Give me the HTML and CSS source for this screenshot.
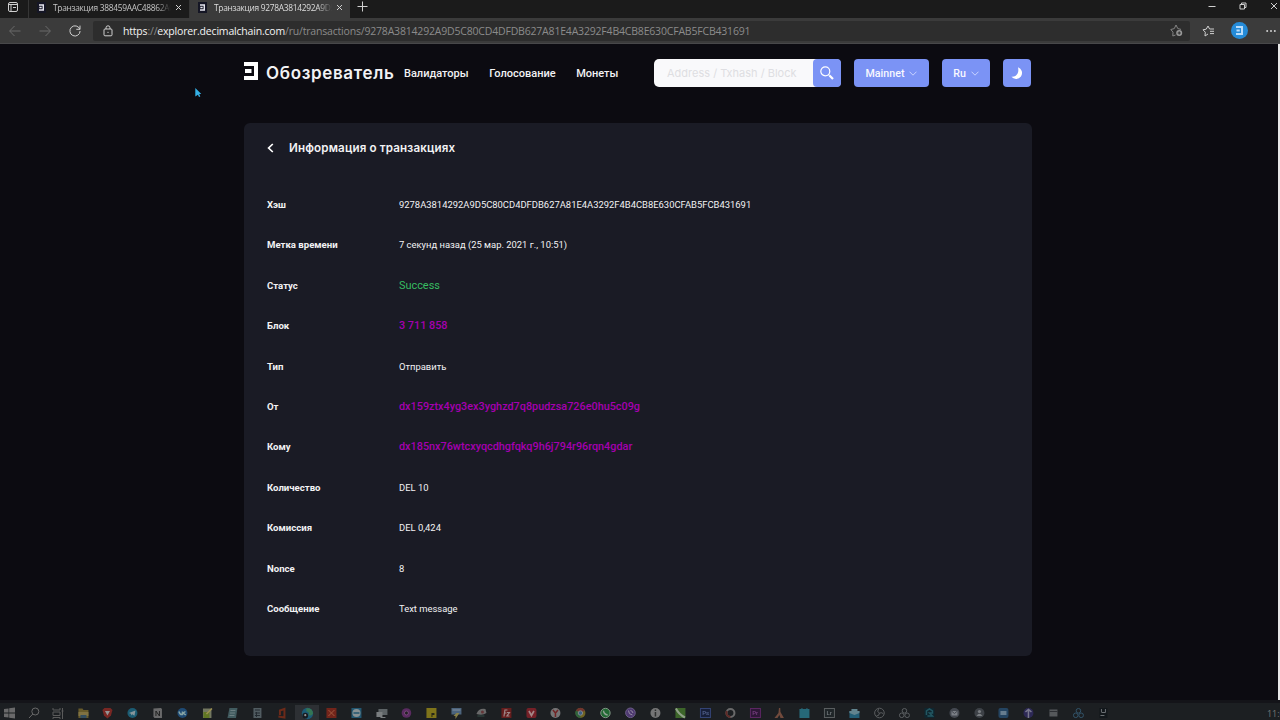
FILE: index.html
```html
<!DOCTYPE html>
<html lang="ru">
<head>
    <meta charset="UTF-8">
    <title>Транзакция</title>
    <link rel="stylesheet" href="styles.css">
</head>
<body>
<svg class="defs">
    <symbol id="logo" viewBox="0 0 14 18">
        <path d="M0 0H14V18H0V14H10V4H0zM1 7H7.5V11H1z"/>
    </symbol>
</svg>

<div class="tabs">
    <div class="tab-menu">
        <svg width="12" height="12" viewBox="0 0 12 12"><rect x="1.5" y="1.5" width="9" height="9" rx="1.5"/><path d="M1.5 3.5H10.5M4 4V10M6 6.5H9"/></svg>
    </div>
    <div class="tab">
        <span class="favicon"><svg width="5" height="7"><use href="#logo"/></svg></span>
        <span class="tab-title">Транзакция 388459AAC48862A0</span>
        <svg class="close" width="7" height="7" viewBox="0 0 7 7"><path d="M1 1L6 6M6 1L1 6"/></svg>
    </div>
    <div class="tab active">
        <span class="favicon"><svg width="5" height="7"><use href="#logo"/></svg></span>
        <span class="tab-title">Транзакция 9278A3814292A9D5</span>
        <svg class="close" width="7" height="7" viewBox="0 0 7 7"><path d="M1 1L6 6M6 1L1 6"/></svg>
    </div>
    <svg class="plus" width="11" height="11" viewBox="0 0 11 11"><path d="M5.5 .5V10.5M.5 5.5H10.5"/></svg>
    <div class="window-buttons">
        <svg width="8" height="8" viewBox="0 0 8 8"><path d="M.5 4.5H7.5"/></svg>
        <svg width="8" height="8" viewBox="0 0 8 8"><path d="M1 2.5H5.5V7H1zM2.5 2.5V1H7V5.5H5.5"/></svg>
        <svg width="8" height="8" viewBox="0 0 8 8"><path d="M1 1L7 7M7 1L1 7"/></svg>
    </div>
</div>

<div class="toolbar">
    <div class="nav-buttons">
        <svg class="off" width="12" height="12" viewBox="0 0 12 12"><path d="M11.5 6H.8M5.5 1L.6 6L5.5 11"/></svg>
        <svg class="off" width="12" height="12" viewBox="0 0 12 12"><path d="M.5 6H11.2M6.5 1L11.4 6L6.5 11"/></svg>
        <svg width="12" height="12" viewBox="0 0 12 12"><path d="M10.8 4.2A5.1 5.1 0 1 0 11.1 6M11 .6V4.3H7.3"/></svg>
    </div>
    <div class="address">
        <svg width="10" height="12" viewBox="0 0 10 12"><rect x="1" y="4" width="8" height="6.8" rx="1"/><path d="M3 4V2.8A2 2 0 0 1 7 2.8V4M5 6.8V8"/></svg>
        <p class="url"><span class="strong">https</span>://<span class="strong">explorer.decimalchain.com</span><span class="path">/ru/transactions/9278A3814292A9D5C80CD4DFDB627A81E4A3292F4B4CB8E630CFAB5FCB431691</span></p>
        <svg class="star-add" width="13" height="13" viewBox="0 0 13 13"><path d="M5.5 11L2.8 12L3 8.2L.8 5.5L4.3 4.6L6 1L7.8 4.6L11 5.4"/><circle class="dot" cx="9.2" cy="9" r="3"/><path class="cut" d="M9.2 7.4V10.6M7.6 9H10.8"/></svg>
    </div>
    <div class="tools">
        <svg width="13" height="12" viewBox="0 0 13 12"><path d="M6 9L3 11L3.3 7.2L1 4.8L4.2 4.2L6 1L7.6 4H12M8 6.3H12M8 8.6H12"/></svg>
        <span class="avatar"><svg width="7" height="9"><use href="#logo"/></svg></span>
        <svg class="more" width="10" height="4" viewBox="0 0 10 4"><circle cx="1.2" cy="2" r="1"/><circle cx="5" cy="2" r="1"/><circle cx="8.8" cy="2" r="1"/></svg>
    </div>
</div>

<div class="page">
    <svg class="cursor" width="7" height="10" viewBox="0 0 7 10"><path d="M.3 0L6.3 6H4.2L5.3 8.6L4 9.1L2.9 6.7L.3 8.4z"/></svg>
    <header>
        <svg class="logo" width="14" height="18"><use href="#logo"/></svg>
        <h1>Обозреватель</h1>
        <nav>
            <a>Валидаторы</a>
            <a>Голосование</a>
            <a>Монеты</a>
        </nav>
        <div class="search">
            <span class="placeholder">Address / Txhash / Block</span>
            <button><svg width="14" height="14" viewBox="0 0 14 14"><circle cx="5.3" cy="5.3" r="4.5"/><path d="M8.6 8.6L9.5 9.5"/><path class="handle" d="M9.5 9.5L13 13"/></svg></button>
        </div>
        <button class="btn mainnet">Mainnet <svg width="8" height="5" viewBox="0 0 8 5"><path d="M.5 .7L4 4.2L7.5 .7"/></svg></button>
        <button class="btn lang">Ru <svg width="8" height="5" viewBox="0 0 8 5"><path d="M.5 .7L4 4.2L7.5 .7"/></svg></button>
        <button class="btn theme"><svg width="12" height="12" viewBox="0 0 12 12"><path d="M7 .3A6 6 0 1 1 .4 9.8C5 10.2 8.5 6.5 7 .3z"/></svg></button>
    </header>

    <main class="card">
        <div class="card-title">
            <svg width="7" height="10" viewBox="0 0 7 10"><path d="M5.8 1L1.6 5L5.8 9"/></svg>
            <h2>Информация о транзакциях</h2>
        </div>
        <dl>
            <dt>Хэш</dt>
            <dd>9278A3814292A9D5C80CD4DFDB627A81E4A3292F4B4CB8E630CFAB5FCB431691</dd>
            <dt>Метка времени</dt>
            <dd>7 секунд назад (25 мар. 2021 г., 10:51)</dd>
            <dt>Статус</dt>
            <dd class="success">Success</dd>
            <dt>Блок</dt>
            <dd class="link">3 711 858</dd>
            <dt>Тип</dt>
            <dd>Отправить</dd>
            <dt>От</dt>
            <dd class="link">dx159ztx4yg3ex3yghzd7q8pudzsa726e0hu5c09g</dd>
            <dt>Кому</dt>
            <dd class="link">dx185nx76wtcxyqcdhgfqkq9h6j794r96rqn4gdar</dd>
            <dt>Количество</dt>
            <dd>DEL 10</dd>
            <dt>Комиссия</dt>
            <dd>DEL 0,424</dd>
            <dt>Nonce</dt>
            <dd>8</dd>
            <dt>Сообщение</dt>
            <dd>Text message</dd>
        </dl>
    </main>
    <div class="scrollbar"></div>
</div>

<div class="taskbar">
    <svg viewBox="0 0 12 12"><path fill="#777" d="M1 2L5.5 1.4V5.6H1zM6.2 1.3L12 .5V5.6H6.2zM1 6.4H5.5V10.6L1 10zM6.2 6.4H12V11.5L6.2 10.7z"/></svg>
    <svg viewBox="0 0 12 12"><g fill="none" stroke="#777"><circle cx="7.3" cy="4.5" r="3.5"/><path d="M4.8 7L1 11"/></g></svg>
    <svg viewBox="0 0 12 12"><g fill="none" stroke="#666"><path d="M1 1V3H8V1M1 5H8V8.5H1zM1 12V10.5H8V12M10.5 1V12M9.5 4H11.5"/></g></svg>
    <svg viewBox="0 0 12 12"><path fill="#75652c" d="M1 1.5H5L6 3H11V11H1z"/><path fill="#918048" d="M1 5H11V9H1z"/><path fill="#38566a" d="M3 8H9V11H3z"/></svg>
    <svg viewBox="0 0 12 12"><path fill="#8a2924" d="M3 1H9L11 3L9.5 8.5L6 11.5L2.5 8.5L1 3z"/><path fill="#aaa" d="M3.5 4H8.5L6 8.5z"/></svg>
    <svg viewBox="0 0 12 12"><circle cx="6" cy="6" r="5" fill="#1b6681"/><path fill="#9aabb0" d="M2.5 6L9 3.4L8 8.7L5.7 7.2L4.8 8.5L4.5 6.7z"/></svg>
    <svg viewBox="0 0 12 12"><path fill="#777" d="M2 1.5L9.5 1L10.5 2V11H3L2 9.5z"/><path fill="none" stroke="#222" d="M4.5 9V4L8 9V4"/></svg>
    <svg viewBox="0 0 12 12"><circle cx="6" cy="6" r="5" fill="#1f5283"/><path fill="none" stroke="#9bb" stroke-width="1.5" d="M2.5 4.5Q3.5 8 6 7.5V4.5M9 4.5L6.8 6L9.3 8"/></svg>
    <svg viewBox="0 0 12 12"><path fill="#82876b" d="M1.5 1.5H10V11H1.5z"/><path fill="#6d8724" d="M2 5H8V11H2z"/><path stroke="#b3a55a" stroke-width="1.5" d="M5 7L10.5 1.5"/></svg>
    <svg viewBox="0 0 12 12"><path fill="#48666a" d="M3 1H11L9.5 11H1z"/><path stroke="#7a9093" d="M4 3.5H9M3.5 6H8.5M3 8.5H8"/></svg>
    <svg viewBox="0 0 12 12"><path fill="#5b676d" d="M2 1H10V11H2z"/><path stroke="#252d33" d="M3.5 3H8.5M3.5 6H8.5M3.5 8.5H8.5M5 5V10"/></svg>
    <svg viewBox="0 0 12 12"><path fill="none" stroke="#7a2c18" stroke-width="2" d="M2 9.5L8 10.5V2L3.5 3.5V8"/></svg>
    <svg class="current" viewBox="0 0 12 12"><circle cx="6" cy="6" r="5.2" fill="#1c6684"/><path fill="#39855d" d="M5 1.2Q10.5 .5 11.2 6Q10 8.5 7 7.5Q8.5 5 5 4z"/><circle cx="4" cy="8" r="2.6" fill="#171b20"/><circle cx="4" cy="7.5" r="1" fill="#aaa"/></svg>
    <svg viewBox="0 0 12 12"><path fill="#812519" d="M1 1H11V11H1z"/><path stroke="#b86144" d="M3 3L9 9M9 3L3 9"/></svg>
    <svg viewBox="0 0 12 12"><path fill="#23607e" d="M1 1H11V11H1z"/><circle cx="6" cy="6" r="4" fill="#9aa5a8"/><path stroke="#23607e" stroke-width="1.5" d="M3 6H9"/></svg>
    <svg viewBox="0 0 12 12"><path fill="#697072" d="M3 2H12V8H3z"/><path fill="#8a8e90" d="M1 5H7V10H1zM5 10H10V11H5z"/></svg>
    <svg viewBox="0 0 12 12"><circle cx="6" cy="6" r="4.8" fill="#652d6c"/><circle cx="6" cy="6" r="2" fill="#222" stroke="#87518a"/></svg>
    <svg viewBox="0 0 12 12"><path fill="#918319" d="M1 1H11V11H1z"/><path fill="#282817" d="M6 6H9V8H7V10H6z"/></svg>
    <svg viewBox="0 0 12 12"><path fill="#54708c" d="M1 1H11V7.5H1z"/><path fill="#9b914e" d="M6 6H9L5 12V9H3z"/><path stroke="#92a1b4" d="M2 3H10"/></svg>
    <svg viewBox="0 0 12 12"><path fill="#777" d="M1 7Q3 1 10 2L11 6Q7 9 1 7"/><circle cx="7" cy="5" r="1.5" fill="#713a3b"/><path stroke="#38554c" d="M2 9H9"/></svg>
    <svg viewBox="0 0 12 12"><path fill="#731d1d" d="M1 1H11V11H1z"/><path fill="none" stroke="#b59b9b" stroke-width="1.2" d="M3.5 9.5L4.5 3H7M4 6H6M6.5 5.5H9L6.5 9H9"/></svg>
    <svg viewBox="0 0 12 12"><rect x="1" y="1" width="10" height="10" rx="2" fill="#852129"/><path fill="none" stroke="#b99" stroke-width="1.7" d="M3.5 4L6 8.5L8.5 4"/></svg>
    <svg viewBox="0 0 12 12"><circle cx="6" cy="6" r="5" fill="#858485"/><path fill="none" stroke="#802526" stroke-width="1.5" d="M3.5 3L6 6L8.5 3M6 6V10"/></svg>
    <svg viewBox="0 0 12 12"><circle cx="6" cy="6" r="5" fill="#7e7024"/><path fill="#80372f" d="M6 6L1.5 3.5A5 5 0 0 1 10.5 3.5z"/><path fill="#326f41" d="M6 6L1.5 3.5A5 5 0 0 0 6 11z"/><circle cx="6" cy="6" r="2.2" fill="#406b97" stroke="#999"/></svg>
    <svg viewBox="0 0 12 12"><circle cx="6" cy="6" r="4.7" fill="#237536" stroke="#91aa96"/><path fill="none" stroke="#a5b8a9" stroke-width="1.4" d="M4 3.7Q4.5 7.5 8.2 8"/></svg>
    <svg viewBox="0 0 12 12"><circle cx="6" cy="5.8" r="4.8" fill="#563d7f" stroke="#7b699b"/><path fill="none" stroke="#aaa0b9" d="M4 3.5Q4 7.5 8 8M6 3.5Q8.5 4 8.5 6"/></svg>
    <svg viewBox="0 0 12 12"><circle cx="6" cy="6" r="5" fill="#858585"/><path stroke="#333" stroke-width="1.5" d="M6 5V9.5M6 2.5V4"/></svg>
    <svg viewBox="0 0 12 12"><path fill="#42722b" d="M1 1H11V11H1z"/><path stroke="#a4b79a" stroke-width="2" d="M1.5 1.5Q4 7 10.5 10.5" fill="none"/></svg>
    <svg viewBox="0 0 12 12"><rect x="1" y="1.5" width="10" height="9" fill="#17203e" stroke="#384a83"/><text x="2.7" y="8.3" fill="#6274a8">Ps</text></svg>
    <svg viewBox="0 0 12 12"><g fill="none" stroke-width="2"><circle cx="6" cy="6" r="4" stroke="#777"/><path stroke="#6b2c27" d="M2.5 4A4 4 0 0 0 6 10"/></g></svg>
    <svg viewBox="0 0 12 12"><rect x="1" y="1.5" width="10" height="9" fill="#32163b" stroke="#66286e"/><text x="2.8" y="8.3" fill="#8c4797">Pr</text></svg>
    <svg viewBox="0 0 12 12"><path fill="#805241" d="M5.5 1H6.8L7 5L10.5 11H7L6 8L4 11H1L5 6z"/></svg>
    <svg viewBox="0 0 12 12"><path fill="#287587" d="M1 2H3V1H4V2H8V1H9V2H11V11H1z"/></svg>
    <svg viewBox="0 0 12 12"><rect x="1" y="1.5" width="10" height="9" fill="#20272a" stroke="#65696b"/><text x="3" y="8.3" fill="#858c90">Lr</text></svg>
    <svg viewBox="0 0 12 12"><path fill="#246a85" d="M1 4H11V11H1z"/><path fill="#6e96a2" d="M3 2H9V4H11V6L6 8L1 6V4H3z"/></svg>
    <svg viewBox="0 0 12 12"><g fill="none" stroke="#66696b"><circle cx="6" cy="6" r="4.8"/><path d="M5 2Q3 5 6 6Q9 5 10 7M6 6Q6 9 3 9"/></g></svg>
    <svg viewBox="0 0 12 12"><g fill="none" stroke="#666a6d"><circle cx="6" cy="3.8" r="2.3"/><circle cx="3.3" cy="8.3" r="2.3"/><circle cx="8.7" cy="8.3" r="2.3"/></g></svg>
    <svg viewBox="0 0 12 12"><path fill="#0d2832" d="M1 1H11V11H1z"/><path fill="none" stroke="#24606c" stroke-width="1.5" d="M3 8V4L6 2L9 4V6H6L9 9H4"/></svg>
    <svg viewBox="0 0 12 12"><circle cx="6" cy="6" r="5" fill="#4b5059"/><path fill="#8c9098" d="M3 4H9V8.5H3z"/><path fill="none" stroke="#4b5059" d="M3 4L6 6.5L9 4"/></svg>
    <svg viewBox="0 0 12 12"><circle cx="6" cy="6" r="5" fill="#43484e"/><circle cx="6" cy="4.5" r="1.6" fill="#8a8e93"/><path fill="#8a8e93" d="M3 9Q6 4.5 9 9z"/></svg>
    <svg viewBox="0 0 12 12"><rect x="1" y="1" width="10" height="10" rx="2" fill="#264b6c"/><path fill="#748ea3" d="M3 4H9V8H3z"/></svg>
    <svg viewBox="0 0 12 12"><circle cx="6" cy="6" r="5" fill="#302b60"/><path stroke="#8a88a1" stroke-width="1.5" d="M6 2V11M3 5L6 2.5L9 5" fill="none"/></svg>
    <svg viewBox="0 0 12 12"><path fill="#5f6266" d="M2 2.5H10V9.5H2z"/><path stroke="#303238" d="M2 4.5H10"/></svg>
    <svg viewBox="0 0 12 12"><g fill="none" stroke="#365d76"><circle cx="6" cy="3.8" r="2.3"/><circle cx="3.3" cy="8.3" r="2.3"/><circle cx="8.7" cy="8.3" r="2.3"/></g></svg>
    <svg viewBox="0 0 12 12"><path fill="#11161a" d="M2 1H10V11H2z"/><path fill="none" stroke="#777c80" d="M4 2V5M4 5.5H8V2M3 8.5H7"/></svg>
    <span class="clock">11:0</span>
</div>
</body>
</html>
```
FILE: styles.css
```css
* {
    box-sizing: border-box;
}

body {
    margin: 0;
    width: 1280px;
    height: 720px;
    overflow: hidden;
    display: flex;
    flex-direction: column;
    background: #0c0b11;
    color: #f2f2f4;
    font-family: Roboto, sans-serif;
}

svg {
    flex: none;
    display: block;
}

p, h1, h2, dl, dd {
    margin: 0;
}

.defs {
    position: absolute;
    width: 0;
    height: 0;
}

/* browser */
.tabs {
    display: flex;
    height: 18px;
    background: #1b1b1b;
    font: 8.4px "Open Sans", sans-serif;
}

.tabs svg, .toolbar svg {
    fill: none;
    stroke: #d0d0d0;
}

.tab-menu {
    width: 28px;
    padding: 1px 0 0 7px;
}

.tab {
    display: flex;
    align-items: center;
    width: 161px;
    height: 18px;
    padding: 0 7px 3px 8px;
    border-left: 1px solid #363636;
    color: #c4c4c4;
}

.tab.active {
    background: #3b3b3b;
    color: #ddd;
}

.favicon {
    display: flex;
    align-items: center;
    justify-content: center;
    width: 9px;
    height: 11px;
    background: #151625;
}

.tabs .favicon svg, .avatar svg {
    fill: #e5e5ee;
    stroke: none;
}

.tab-title {
    width: 118px;
    margin-left: 7px;
    overflow: hidden;
    white-space: nowrap;
    letter-spacing: -0.3px;
    -webkit-mask-image: linear-gradient(90deg, #000 88%, transparent);
    mask-image: linear-gradient(90deg, #000 88%, transparent);
}

.close {
    margin-left: auto;
}

.plus {
    margin: 1px 0 0 7px;
}

.window-buttons {
    display: flex;
    gap: 23px;
    margin: 2px 2px 0 auto;
}

.toolbar {
    display: flex;
    align-items: center;
    height: 26px;
    background: #3b3b3b;
    border-bottom: 1px solid #48484a;
}

.nav-buttons {
    display: flex;
    gap: 18px;
    width: 93px;
    padding-left: 9px;
}

.toolbar .off {
    stroke: #6b6b6b;
}

.address {
    display: flex;
    align-items: center;
    width: 1097px;
    height: 20px;
    padding: 0 7px 0 10px;
    border-radius: 2px;
    background: #2d2d2d;
}

.url {
    margin-left: 10px;
    color: #8b8b8b;
    font: 10.5px "Open Sans", sans-serif;
    letter-spacing: -0.19px;
    white-space: nowrap;
}

.url .strong {
    color: #f3f3f3;
}

.toolbar .star-add {
    margin-left: auto;
    stroke: #858585;
}

.star-add .dot {
    fill: #999;
    stroke: none;
}

.star-add .cut {
    stroke: #2d2d2d;
}

.tools {
    display: flex;
    align-items: center;
    width: 90px;
    padding-left: 12px;
}

.avatar {
    display: flex;
    align-items: center;
    justify-content: center;
    width: 17px;
    height: 17px;
    margin: 0 18px 0 16px;
    border-radius: 50%;
    background: #258bd8;
}

.toolbar .avatar svg {
    fill: #b9dcfa;
    stroke: none;
}

.toolbar .more {
    fill: #d0d0d0;
    stroke: none;
}

/* page */
.page {
    position: relative;
    height: 659px;
    padding-left: 243.5px;
}

.cursor {
    position: absolute;
    left: 195px;
    top: 44px;
    fill: #35b0e5;
}

.scrollbar {
    position: absolute;
    top: 0;
    right: 0;
    width: 2px;
    height: 659px;
    background: #e8e8e8;
}

header {
    display: flex;
    align-items: center;
    height: 58px;
    width: 788px;
}

.logo {
    fill: #fff;
    margin-bottom: 5px;
}

h1 {
    width: 129px;
    margin-left: 8.5px;
    font: 600 17px/22px Inter, sans-serif;
    letter-spacing: 0.65px;
    white-space: nowrap;
}

nav {
    display: flex;
    gap: 20.5px;
    width: 250px;
    margin-left: 9px;
    font-size: 11px;
    font-weight: 500;
}

.search {
    display: flex;
    width: 187px;
    height: 28px;
    border-radius: 5px;
    background: #f9f9fb;
}

.placeholder {
    width: 159px;
    padding-left: 13px;
    color: #dedee2;
    font: 11px/28px Inter, sans-serif;
    white-space: nowrap;
}

button {
    display: flex;
    align-items: center;
    justify-content: center;
    width: 28px;
    height: 28px;
    padding: 0;
    border: none;
    border-radius: 4px;
    background: #7b93f5;
    color: #f8f8ff;
    font: 500 10.67px Roboto, sans-serif;
}

button svg {
    fill: none;
    stroke: #fff;
    stroke-width: 1.2;
}

.handle {
    stroke-width: 2.2;
}

.btn svg {
    margin-left: 5px;
    stroke: #c8d2ff;
    stroke-width: 1;
}

.mainnet {
    width: 75px;
    margin-left: 13px;
}

.lang {
    width: 48px;
    margin-left: 13px;
}

.theme {
    margin-left: 13px;
}

.theme svg {
    margin: 0;
    fill: #fff;
    stroke: none;
}

.card {
    width: 788px;
    height: 533.5px;
    margin-top: 20.5px;
    padding: 15.5px 23.5px;
    border-radius: 6px;
    background: #1a1b25;
}

.card-title {
    display: flex;
    align-items: center;
    height: 20px;
}

.card-title svg {
    fill: none;
    stroke: #fff;
    stroke-width: 1.7;
}

h2 {
    margin-left: 15px;
    font: 600 11.6px Inter, sans-serif;
    letter-spacing: 0.15px;
    white-space: nowrap;
}

dl {
    display: grid;
    grid-template-columns: 132px auto;
    grid-auto-rows: 40.4px;
    align-items: center;
    margin-top: 26.4px;
    font-size: 9.42px;
    white-space: nowrap;
}

dt {
    font-size: 9.6px;
    font-weight: 700;
}

.success {
    color: #37bd62;
    font-size: 10.9px;
}

.link {
    color: #a500af;
    font-size: 10.85px;
    font-weight: 500;
}

/* taskbar */
.taskbar {
    display: flex;
    align-items: center;
    height: 17px;
    padding: 3px 0 0 3px;
    overflow: hidden;
    background: #1c1f22;
    box-shadow: 0 -3px 0 #141419;
    z-index: 1;
}

.taskbar svg {
    width: 24.9px;
    height: 12px;
    margin: 0;
    opacity: 0.85;
}

.taskbar svg:nth-child(-n+3) {
    width: 12px;
    margin-right: 12.5px;
}

.taskbar svg:nth-child(4) {
    margin-left: -6px;
}

.taskbar .current {
    height: 17px;
    padding: 2px 0;
    background: #303438;
}

.taskbar text {
    font: 500 6px Roboto, sans-serif;
}

.clock {
    margin-left: 151px;
    color: #777;
    font: 9px "Open Sans", sans-serif;
}
```
